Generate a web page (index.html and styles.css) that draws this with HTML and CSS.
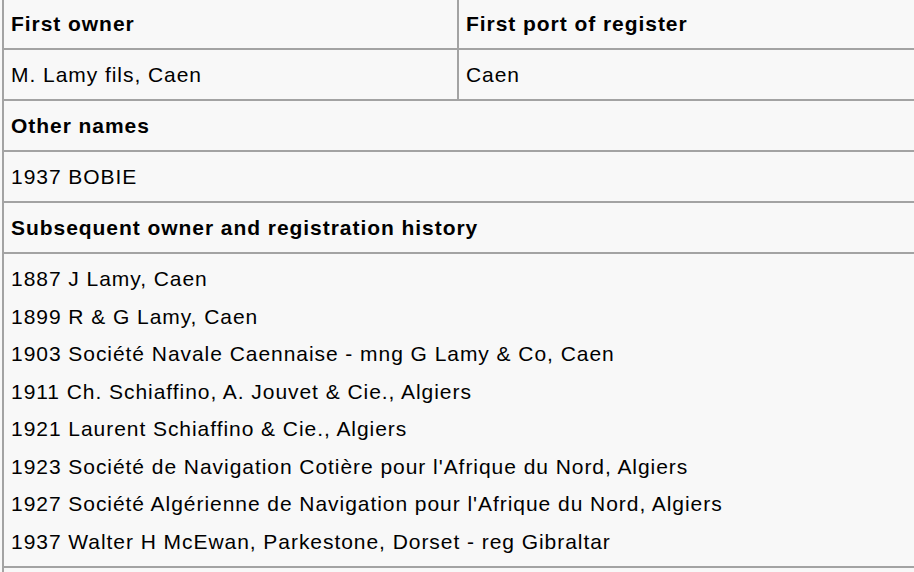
FILE: index.html
```html
<!DOCTYPE html>
<html>
<head>
<meta charset="utf-8">
<link rel="stylesheet" href="styles.css">
</head>
<body>
<table class="info">
  <tr class="row">
    <th class="cell head half">First owner</th>
    <th class="cell head">First port of register</th>
  </tr>
  <tr class="row">
    <td class="cell">M. Lamy fils, Caen</td>
    <td class="cell">Caen</td>
  </tr>
  <tr class="row">
    <th class="cell head" colspan="2">Other names</th>
  </tr>
  <tr class="row">
    <td class="cell" colspan="2">1937 BOBIE</td>
  </tr>
  <tr class="row">
    <th class="cell head" colspan="2">Subsequent owner and registration history</th>
  </tr>
  <tr class="row">
    <td class="cell list" colspan="2">
      <div class="item">1887 J Lamy, Caen</div>
      <div class="item">1899 R &amp; G Lamy, Caen</div>
      <div class="item">1903 Société Navale Caennaise - mng G Lamy &amp; Co, Caen</div>
      <div class="item">1911 Ch. Schiaffino, A. Jouvet &amp; Cie., Algiers</div>
      <div class="item">1921 Laurent Schiaffino &amp; Cie., Algiers</div>
      <div class="item">1923 Société de Navigation Cotière pour l'Afrique du Nord, Algiers</div>
      <div class="item">1927 Société Algérienne de Navigation pour l'Afrique du Nord, Algiers</div>
      <div class="item">1937 Walter H McEwan, Parkestone, Dorset - reg Gibraltar</div>
    </td>
  </tr>
  <tr class="row">
    <td class="cell" colspan="2">&nbsp;</td>
  </tr>
</table>
</body>
</html>
```
FILE: styles.css
```css
html, body {
  margin: 0;
  padding: 0;
  background: #f8f8f8;
}
body {
  font-family: "Liberation Sans", Arial, Helvetica, sans-serif;
  font-size: 21px;
  letter-spacing: 0.95px;
  color: #000;
  overflow: hidden;
}
.info {
  border-collapse: collapse;
  width: 930px;
  margin-left: 2px;
  margin-top: -3px;
  background: #f8f8f8;
}
.cell {
  border: 2px solid #a3a3a3;
  padding: 13px 7px 12px 7px;
  line-height: 24px;
  text-align: left;
  vertical-align: top;
}
.head {
  font-weight: bold;
}
.half {
  width: 439px;
}
.list {
  padding-top: 6px;
  padding-bottom: 6px;
}
.item {
  line-height: 37.5px;
}
```
